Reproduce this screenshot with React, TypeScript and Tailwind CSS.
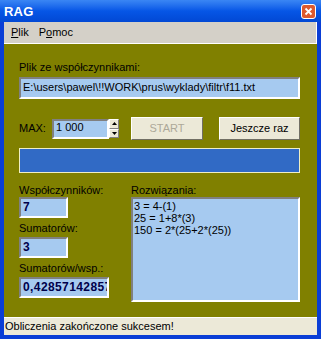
import React from 'react';

const sunken =
  'border-2 border-t-[#808080] border-l-[#808080] border-b-white border-r-white bg-[#a6caf0]';

function Field({ children, className = '' }: { children: React.ReactNode; className?: string }) {
  return <div className={`${sunken} overflow-hidden whitespace-nowrap ${className}`}>{children}</div>;
}

function Button({ label, disabled }: { label: string; disabled?: boolean }) {
  return (
    <div
      className={`h-[23px] flex items-center justify-center bg-[#ece9d8] border border-t-white border-l-white border-r-[#716f64] border-b-[#716f64] text-[11px] ${
        disabled ? 'text-[#aca899]' : 'text-black'
      }`}
    >
      {label}
    </div>
  );
}

export default function App() {
  return (
    <div className="w-[321px] h-[339px] bg-[#0a3ed6] flex flex-col font-['Liberation_Sans',Arial,sans-serif] text-[11px] leading-[13px] select-none">
      {/* title bar */}
      <div className="h-[22px] flex items-center justify-between pl-[4px] pr-[5px] bg-gradient-to-b from-[#3a86f4] via-[#0656e6] to-[#0248d4]">
        <span className="text-white font-bold text-[13px] tracking-[0.2px]">RAG</span>
        <div className="w-[15px] h-[15px] rounded-[3px] border border-white bg-[#dd5a2f] flex items-center justify-center">
          <svg width="9" height="9" viewBox="0 0 9 9">
            <path d="M1.5 1.5 L7.5 7.5 M7.5 1.5 L1.5 7.5" stroke="white" strokeWidth="1.8" />
          </svg>
        </div>
      </div>

      <div className="flex-1 mx-[4px] mb-[4px] flex flex-col">
        {/* menu */}
        <div className="h-[22px] bg-[#d4d0c8] border-b border-r border-white flex items-center gap-[10px] pl-[7px] text-black">
          <span>
            <span className="underline">P</span>lik
          </span>
          <span>
            P<span className="underline">o</span>moc
          </span>
        </div>

        {/* body */}
        <div className="flex-1 bg-[#808000] pl-[15px] pr-[17px] pt-[17px] flex flex-col">
          <div className="text-black">Plik ze współczynnikami:</div>
          <Field className="mt-[3px] h-[22px] px-[2px] pt-[2px] text-black">
            E:\users\pawel\!!WORK\prus\wyklady\filtr\f11.txt
          </Field>

          <div className="mt-[18px] h-[23px] flex items-center">
            <div className="w-[33px] text-black">MAX:</div>
            <Field className="w-[57px] h-[20px] px-[2px] text-black">1 000</Field>
            <div className="w-[10px] h-[19px] flex flex-col">
              <div className="flex-1 bg-[#ece9d8] border border-t-white border-l-white border-r-[#808080] border-b-[#808080] flex items-center justify-center">
                <svg width="5" height="3" viewBox="0 0 5 3"><path d="M2.5 0 L5 3 L0 3 Z" fill="black" /></svg>
              </div>
              <div className="flex-1 bg-[#ece9d8] border border-t-white border-l-white border-r-[#808080] border-b-[#808080] flex items-center justify-center">
                <svg width="5" height="3" viewBox="0 0 5 3"><path d="M0 0 L5 0 L2.5 3 Z" fill="black" /></svg>
              </div>
            </div>
            <div className="ml-[12px] w-[72px]">
              <Button label="START" disabled />
            </div>
            <div className="ml-[16px] w-[81px]">
              <Button label="Jeszcze raz" />
            </div>
          </div>

          <div className="mt-[8px] h-[25px] border border-[#f0efc4] bg-[#316ac5]" />

          <div className="mt-[11px] flex">
            <div className="w-[90px] flex flex-col">
              <div className="text-black">Współczynników:</div>
              <Field className="w-[49px] h-[21px] px-[2px] pt-[2px] text-[12px] font-bold text-[#00004a]">7</Field>
              <div className="mt-[4px] text-black">Sumatorów:</div>
              <Field className="mt-[2px] w-[49px] h-[21px] px-[2px] pt-[2px] text-[12px] font-bold text-[#00004a]">3</Field>
              <div className="mt-[4px] text-black">Sumatorów/wsp.:</div>
              <Field className="mt-[2px] w-[90px] h-[21px] px-[2px] pt-[2px] text-[12px] font-bold tracking-[0.4px] text-[#00004a]">0,42857142857</Field>
            </div>
            <div className="ml-[22px] flex-1 flex flex-col">
              <div className="text-black">Rozwiązania:</div>
              <Field className="h-[105px] px-[1px] pt-[1px] leading-[12px] text-black">
                <div>3 = 4-(1)</div>
                <div>25 = 1+8*(3)</div>
                <div>150 = 2*(25+2*(25))</div>
              </Field>
            </div>
          </div>
        </div>

        {/* status bar */}
        <div className="h-[18px] bg-[#ece9d8] border-t border-white flex items-center pl-[1px] text-black">
          Obliczenia zakończone sukcesem!
        </div>
      </div>
    </div>
  );
}
